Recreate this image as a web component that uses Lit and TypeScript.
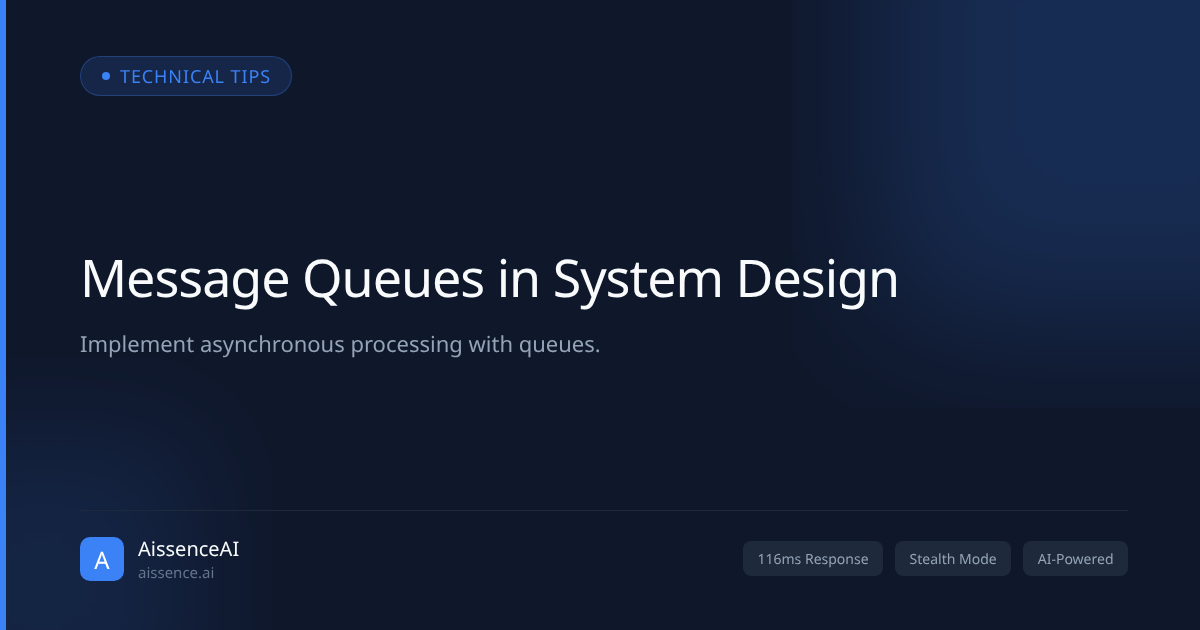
import { LitElement, html, css } from 'lit';
import { customElement } from 'lit/decorators.js';

@customElement('app-root')
export class AppRoot extends LitElement {
  static styles = css`
    :host {
      display: block;
      font-family: 'Noto Sans', sans-serif;
      text-rendering: geometricPrecision;
    }

    .card {
      position: relative;
      box-sizing: border-box;
      width: 1200px;
      height: 630px;
      overflow: hidden;
      background: #0f172a;
      display: flex;
      flex-direction: column;
      padding: 56px 72px 49px 80px;
    }

    .accent {
      position: absolute;
      left: 0;
      top: 0;
      bottom: 0;
      width: 6px;
      background: #3b82f6;
    }

    /* the clip boxes give the faint hard cut at the outer edge of each glow */
    .clip-top {
      position: absolute;
      top: 0;
      right: 0;
      width: 408px;
      height: 408px;
      overflow: hidden;
    }

    .clip-bottom {
      position: absolute;
      left: 0;
      bottom: 0;
      width: 272px;
      height: 273px;
      overflow: hidden;
    }

    .glow-top {
      position: absolute;
      top: -180px;
      right: -180px;
      width: 500px;
      height: 500px;
      background: #3b82f6;
      opacity: 0.2;
      filter: blur(80px);
    }

    .glow-bottom {
      position: absolute;
      left: -112px;
      bottom: -111px;
      width: 310px;
      height: 310px;
      background: #3b82f6;
      opacity: 0.12;
      filter: blur(60px);
    }

    .content {
      position: relative;
      flex: 1;
      display: flex;
      flex-direction: column;
      will-change: transform;
    }

    .badge {
      align-self: flex-start;
      box-sizing: border-box;
      height: 40px;
      display: flex;
      align-items: center;
      gap: 10px;
      padding: 0 20px 0 21px;
      border: 1px solid rgba(59, 130, 246, 0.3);
      border-radius: 20px;
      background: rgba(59, 130, 246, 0.15);
      color: #3b82f6;
      font-size: 18px;
      letter-spacing: 0.9px;
    }

    .badge-text {
      padding-top: 2px;
    }

    .dot {
      width: 8px;
      height: 8px;
      border-radius: 50%;
      background: #3b82f6;
    }

    .main {
      flex: 1;
      display: flex;
      flex-direction: column;
      justify-content: center;
      padding-top: 1px;
    }

    h1 {
      margin: 0 0 20px;
      font-size: 52px;
      font-weight: 400;
      line-height: 1.2;
      letter-spacing: -0.02em;
      color: #f8fafc;
    }

    .subtitle {
      margin: 0;
      font-size: 22px;
      line-height: 1.4;
      color: #94a3b8;
    }

    .footer {
      display: flex;
      align-items: center;
      justify-content: space-between;
      padding-top: 26px;
      border-top: 1px solid #1e293b;
    }

    .brand {
      display: flex;
      align-items: center;
      gap: 14px;
    }

    .logo {
      box-sizing: border-box;
      width: 44px;
      height: 44px;
      padding-top: 2px;
      border-radius: 10px;
      background: #3b82f6;
      color: #fff;
      font-size: 24px;
      display: flex;
      align-items: center;
      justify-content: center;
    }

    .brand-text {
      height: 44px;
    }

    .brand-name {
      font-size: 20px;
      line-height: 24px;
      color: #f8fafc;
    }

    .brand-url {
      font-size: 15px;
      line-height: 25px;
      color: #64748b;
    }

    .tags {
      display: flex;
      gap: 12px;
      margin-bottom: 1px;
    }

    .tag {
      padding: 9px 14.5px 7px;
      border-radius: 8px;
      background: #1e293b;
      color: #94a3b8;
      font-size: 14px;
      line-height: 19px;
    }
  `;

  render() {
    return html`
      <div class="card">
        <div class="clip-top"><div class="glow-top"></div></div>
        <div class="clip-bottom"><div class="glow-bottom"></div></div>
        <div class="accent"></div>
        <div class="content">
          <div class="badge"><span class="dot"></span><span class="badge-text">TECHNICAL TIPS</span></div>
          <div class="main">
            <h1>Message Queues in System Design</h1>
            <p class="subtitle">Implement asynchronous processing with queues.</p>
          </div>
          <div class="footer">
            <div class="brand">
              <div class="logo">A</div>
              <div class="brand-text">
                <div class="brand-name">AissenceAI</div>
                <div class="brand-url">aissence.ai</div>
              </div>
            </div>
            <div class="tags">
              <span class="tag">116ms Response</span>
              <span class="tag">Stealth Mode</span>
              <span class="tag">AI-Powered</span>
            </div>
          </div>
        </div>
      </div>
    `;
  }
}
